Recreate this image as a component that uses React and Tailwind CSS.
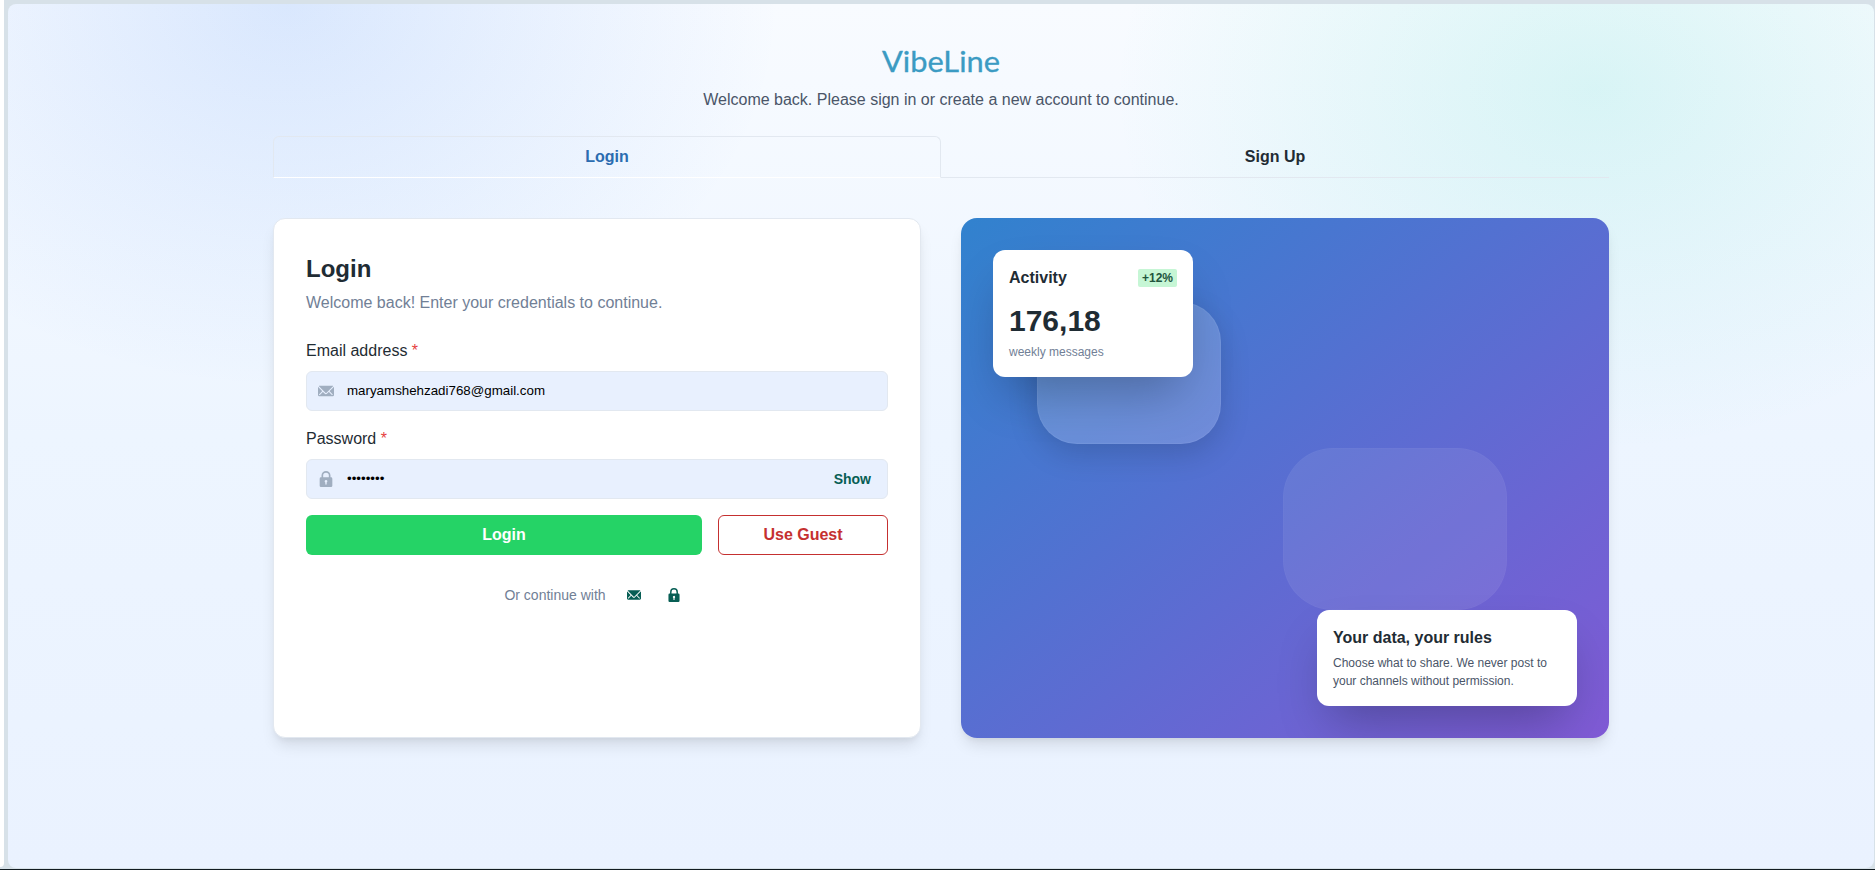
import React from 'react';

function EmailIcon({ className }) {
  return (
    <svg viewBox="0 0 24 24" fill="currentColor" className={className}>
      <path d="M11.114,14.556a1.252,1.252,0,0,0,1.768,0L22.568,4.87a.5.5,0,0,0-.281-.849A1.966,1.966,0,0,0,22,4H2a1.966,1.966,0,0,0-.289.021.5.5,0,0,0-.281.849Z" />
      <path d="M23.888,5.832a.182.182,0,0,0-.2.039l-6.2,6.2a.251.251,0,0,0,0,.354l4.333,4.333a.75.75,0,1,1-1.061,1.061l-4.333-4.333a.25.25,0,0,0-.354,0l-2.333,2.333a2.75,2.75,0,0,1-3.89,0L7.53,13.486a.25.25,0,0,0-.354,0L2.843,17.819a.75.75,0,0,1-1.061-1.061l4.333-4.333a.25.25,0,0,0,0-.354L.309,5.871a.181.181,0,0,0-.2-.039A.184.184,0,0,0,0,6V18a2,2,0,0,0,2,2H22a2,2,0,0,0,2-2V6A.181.181,0,0,0,23.888,5.832Z" />
    </svg>
  );
}

function LockIcon({ className }) {
  return (
    <svg viewBox="0 0 24 24" fill="currentColor" className={className}>
      <path d="M19.5,9.5h-.75V6.75a6.75,6.75,0,0,0-13.5,0V9.5H4.5a2,2,0,0,0-2,2V22a2,2,0,0,0,2,2h15a2,2,0,0,0,2-2V11.5A2,2,0,0,0,19.5,9.5Zm-9.5,6a2,2,0,1,1,3,1.723V19.5a1,1,0,0,1-2,0V17.223A1.994,1.994,0,0,1,10,15.5ZM7.75,6.75a4.25,4.25,0,0,1,8.5,0V9a.5.5,0,0,1-.5.5h-7.5a.5.5,0,0,1-.5-.5Z" />
    </svg>
  );
}

function Field({ label, type, value, icon, action, className }) {
  return (
    <div className={className}>
      <label className="block leading-6">
        {label} <span className="text-[#e53e3e]">*</span>
      </label>
      <div className="mt-2 flex h-10 items-center rounded-md border border-[#e2e8f0] bg-[#e8f0fe] pl-[11px] pr-4">
        <span className="text-[#a0aec0]">{icon}</span>
        <input
          type={type}
          defaultValue={value}
          className="ml-[13px] min-w-0 flex-1 bg-transparent text-[13.3333px] text-black outline-none"
        />
        {action}
      </div>
    </div>
  );
}

function LoginCard() {
  return (
    <section className="rounded-xl border border-[#e2e8f0] bg-white p-8 shadow-[0_10px_15px_-3px_rgba(0,0,0,0.1),0_4px_6px_-2px_rgba(0,0,0,0.05)]">
      <h2 className="text-2xl leading-9 font-bold">Login</h2>
      <p className="mt-1 leading-6 text-[#718096]">Welcome back! Enter your credentials to continue.</p>
      <Field
        className="mt-6"
        label="Email address"
        type="text"
        value="maryamshehzadi768@gmail.com"
        icon={<EmailIcon className="size-4" />}
      />
      <Field
        className="mt-4"
        label="Password"
        type="password"
        value="password"
        icon={<LockIcon className="size-4" />}
        action={<button className="text-sm font-bold text-[#075e54]">Show</button>}
      />
      <div className="mt-4 flex gap-4">
        <button className="h-10 flex-1 rounded-md bg-[#25d366] font-bold text-white">Login</button>
        <button className="h-10 w-[170px] rounded-md border border-[#c53030] font-bold text-[#c53030]">Use Guest</button>
      </div>
      <div className="mt-6 flex items-center justify-center gap-2 text-[#075e54]">
        <span className="mr-1 text-sm leading-[21px] text-[#718096]">Or continue with</span>
        <button className="flex size-8 items-center justify-center">
          <EmailIcon className="size-3.5" />
        </button>
        <button className="flex size-8 items-center justify-center">
          <LockIcon className="size-3.5" />
        </button>
      </div>
    </section>
  );
}

function Showcase() {
  return (
    <section className="relative flex flex-col justify-between overflow-hidden p-8">
      <div className="absolute top-[84px] left-[76px] h-[142px] w-[184px] rounded-[40px] border border-white/5 bg-white/18 shadow-[0_10px_30px_rgba(0,0,0,0.15)]" />
      <div className="absolute top-[230px] left-[322px] h-[162px] w-[224px] rounded-[50px] border border-white/2 bg-white/8" />
      <div className="relative w-[200px] self-start rounded-xl bg-white p-4 shadow-[0_25px_50px_-12px_rgba(0,0,0,0.27)]">
        <div className="flex items-center justify-between leading-6">
          <span className="font-bold">Activity</span>
          <span className="rounded-xs bg-[#c6f6d5] px-1 text-xs leading-[18px] font-bold text-[#22543d]">+12%</span>
        </div>
        <div className="mt-2 text-3xl leading-[45px] font-bold">176,18</div>
        <div className="text-xs leading-[18px] text-[#718096]">weekly messages</div>
      </div>
      <div className="relative w-[260px] self-end rounded-xl bg-white p-4 shadow-[0_25px_50px_-12px_rgba(0,0,0,0.27)]">
        <div className="leading-6 font-bold">Your data, your rules</div>
        <p className="mt-1 text-xs leading-[18px] text-[#4a5568]">
          Choose what to share. We never post to your channels without permission.
        </p>
      </div>
    </section>
  );
}

export default function App() {
  return (
    <div className="flex h-[870px] w-[1875px] overflow-hidden border-b border-[#111b21] bg-[#d7e1e8] font-['Liberation_Sans',Arial,sans-serif] text-base text-[#1f2c34]">
      <div className="h-[867px] w-1 shrink-0 rounded-br-[4px] bg-white" />
      <main className="mt-1 mr-px mb-px ml-1 flex-1 rounded-lg bg-[radial-gradient(820px_640px_at_15%_0%,rgba(59,130,246,0.16),transparent_60%),radial-gradient(800px_600px_at_85%_10%,rgba(45,212,191,0.15),transparent_60%),linear-gradient(180deg,#f8fbff,#edf5ff_50%,#eaf2ff)]">
        <div className="mx-auto w-[1336px] pt-9">
          <header className="text-center">
            <h1 className="-mt-px scale-x-[1.1] font-['Lato',sans-serif] text-[28px] leading-[45px] text-[#3b9bc3] [-webkit-text-stroke:0.3px_#3b9bc3]">VibeLine</h1>
            <p className="mt-1 leading-6 text-[#4a5568]">Welcome back. Please sign in or create a new account to continue.</p>
          </header>
          <nav className="mt-6 flex border-b border-[#e2e8f0] font-bold">
            <button className="-mb-px h-[42px] w-1/2 rounded-t-md border border-[#e2e8f0] border-b-white text-[#2b6cb0]">Login</button>
            <button className="-mb-px h-[42px] w-1/2">Sign Up</button>
          </nav>
          <div className="mt-10 grid h-[520px] grid-cols-2 gap-10">
            <LoginCard />
            <div className="grid rounded-2xl bg-linear-to-br/srgb from-[#3182ce] to-[#805ad5] shadow-[0_10px_15px_-3px_rgba(0,0,0,0.1),0_4px_6px_-2px_rgba(0,0,0,0.05)]">
              <Showcase />
            </div>
          </div>
        </div>
      </main>
    </div>
  );
}
